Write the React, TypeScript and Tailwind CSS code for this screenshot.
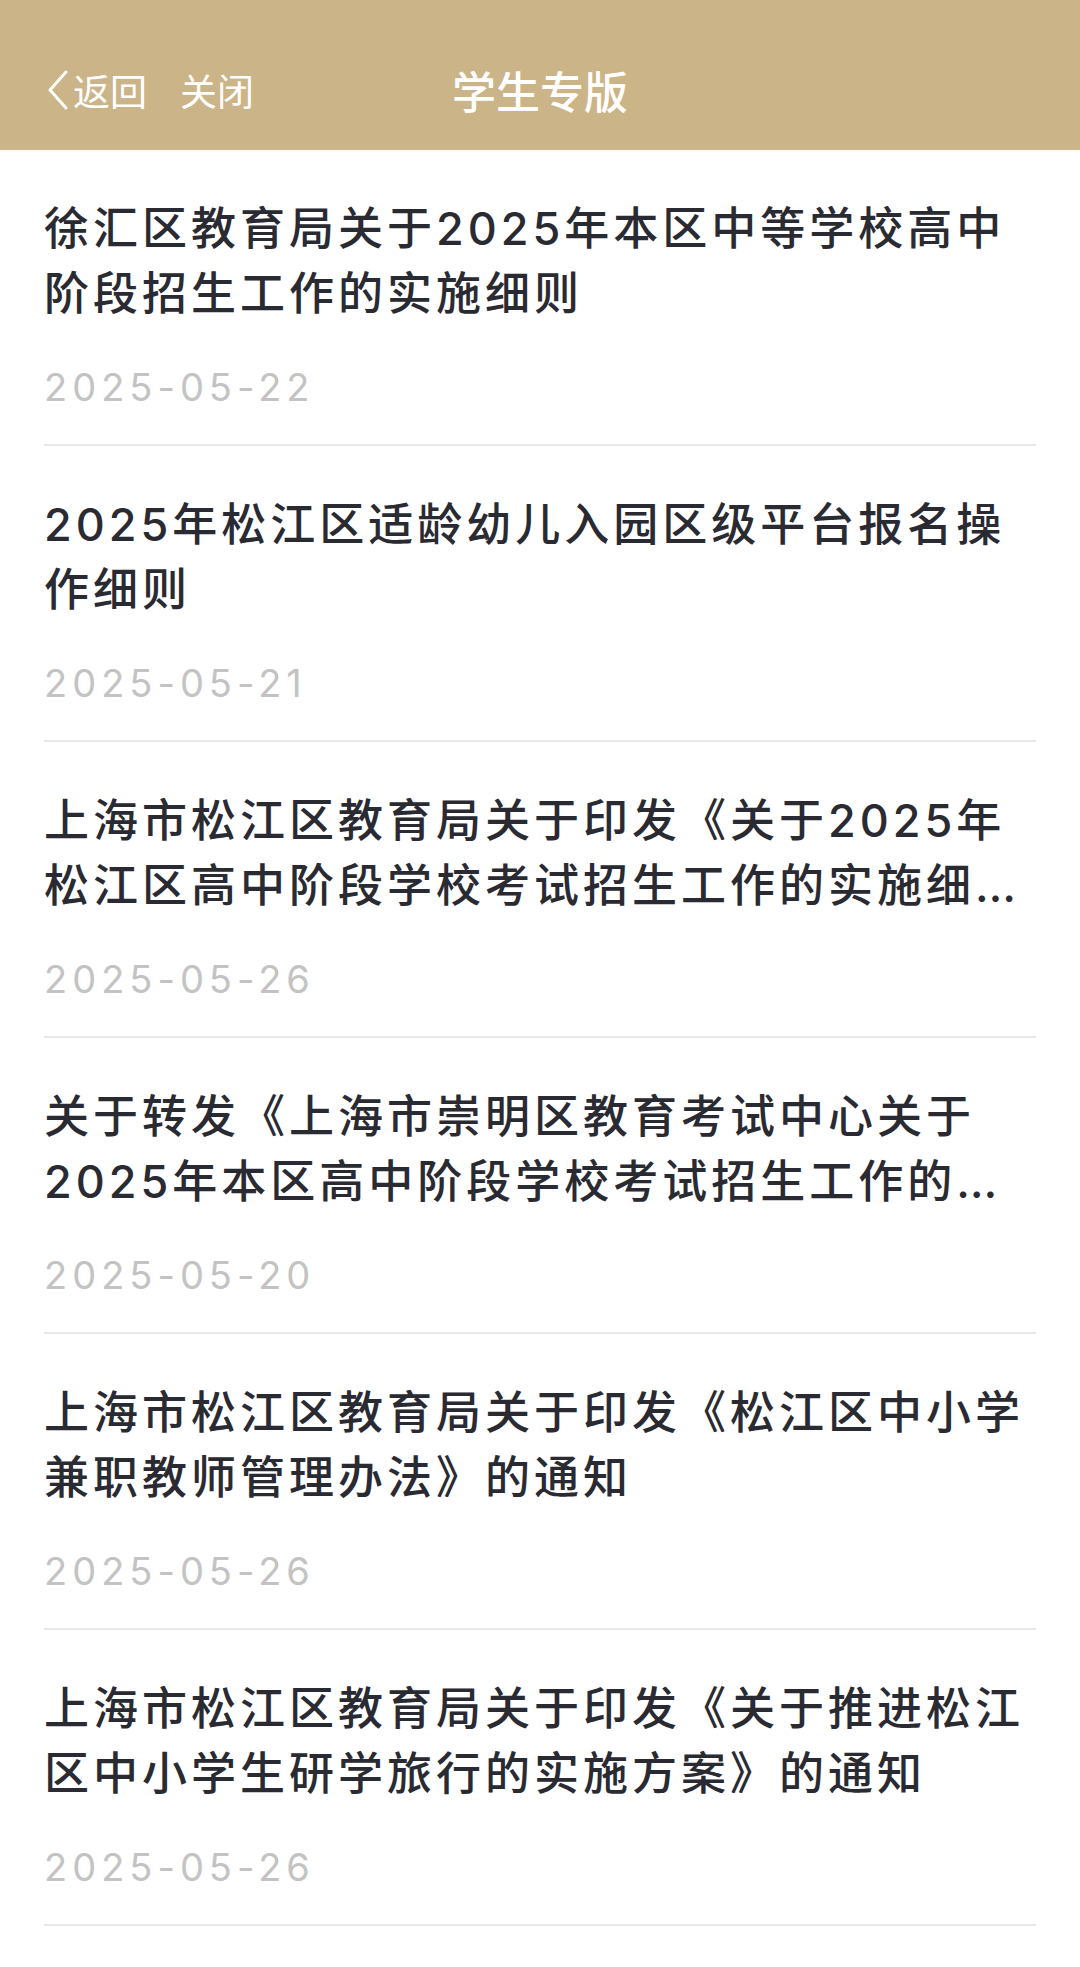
import React from "react";

const items = [
  { title: "徐汇区教育局关于2025年本区中等学校高中阶段招生工作的实施细则", date: "2025-05-22" },
  { title: "2025年松江区适龄幼儿入园区级平台报名操作细则", date: "2025-05-21" },
  { title: "上海市松江区教育局关于印发《关于2025年松江区高中阶段学校考试招生工作的实施细则》的通知", date: "2025-05-26" },
  { title: "关于转发《上海市崇明区教育考试中心关于2025年本区高中阶段学校考试招生工作的实施细则》的通知", date: "2025-05-20" },
  { title: "上海市松江区教育局关于印发《松江区中小学兼职教师管理办法》的通知", date: "2025-05-26" },
  { title: "上海市松江区教育局关于印发《关于推进松江区中小学生研学旅行的实施方案》的通知", date: "2025-05-26" },
];

export default function App() {
  return (
    <div className="min-h-[1967px] w-[1080px] bg-white font-['Inter','Noto_Sans_CJK_SC',sans-serif]">
      <header className="relative flex h-[150px] items-center bg-[#cbb487] pt-[30px] text-white">
        <div className="flex items-center pl-[46px]">
          <svg width="24" height="40" viewBox="0 0 24 40" className="mr-[3px]">
            <polyline points="20,2 4,20 20,38" fill="none" stroke="#ffffff" strokeWidth="3" strokeLinecap="round" strokeLinejoin="round" />
          </svg>
          <span className="font-['Noto_Sans_CJK_SC',sans-serif] text-[37px] leading-[40px] font-normal">返回</span>
          <span className="ml-[33px] font-['Noto_Sans_CJK_SC',sans-serif] text-[37px] leading-[40px] font-normal">关闭</span>
        </div>
        <div className="absolute left-0 right-0 top-[30px] flex h-[120px] items-center justify-center">
          <span className="font-['Noto_Sans_CJK_SC',sans-serif] text-[44px] leading-[50px] font-medium">学生专版</span>
        </div>
      </header>
      <main className="px-[44px]">
        {items.map((it, i) => (
          <div key={i} className="border-b-2 border-[#e8e8e8] pt-[46px] pb-[35px]">
            <div className="line-clamp-2 h-[130px] text-[45px] leading-[65px] tracking-[4px] font-medium text-[#2a2a32]">
              {it.title}
            </div>
            <div className="mt-[39px] h-[44px] text-[38px] leading-[44px] tracking-[5px] text-[#c3c3c3]">
              {it.date}
            </div>
          </div>
        ))}
      </main>
    </div>
  );
}
